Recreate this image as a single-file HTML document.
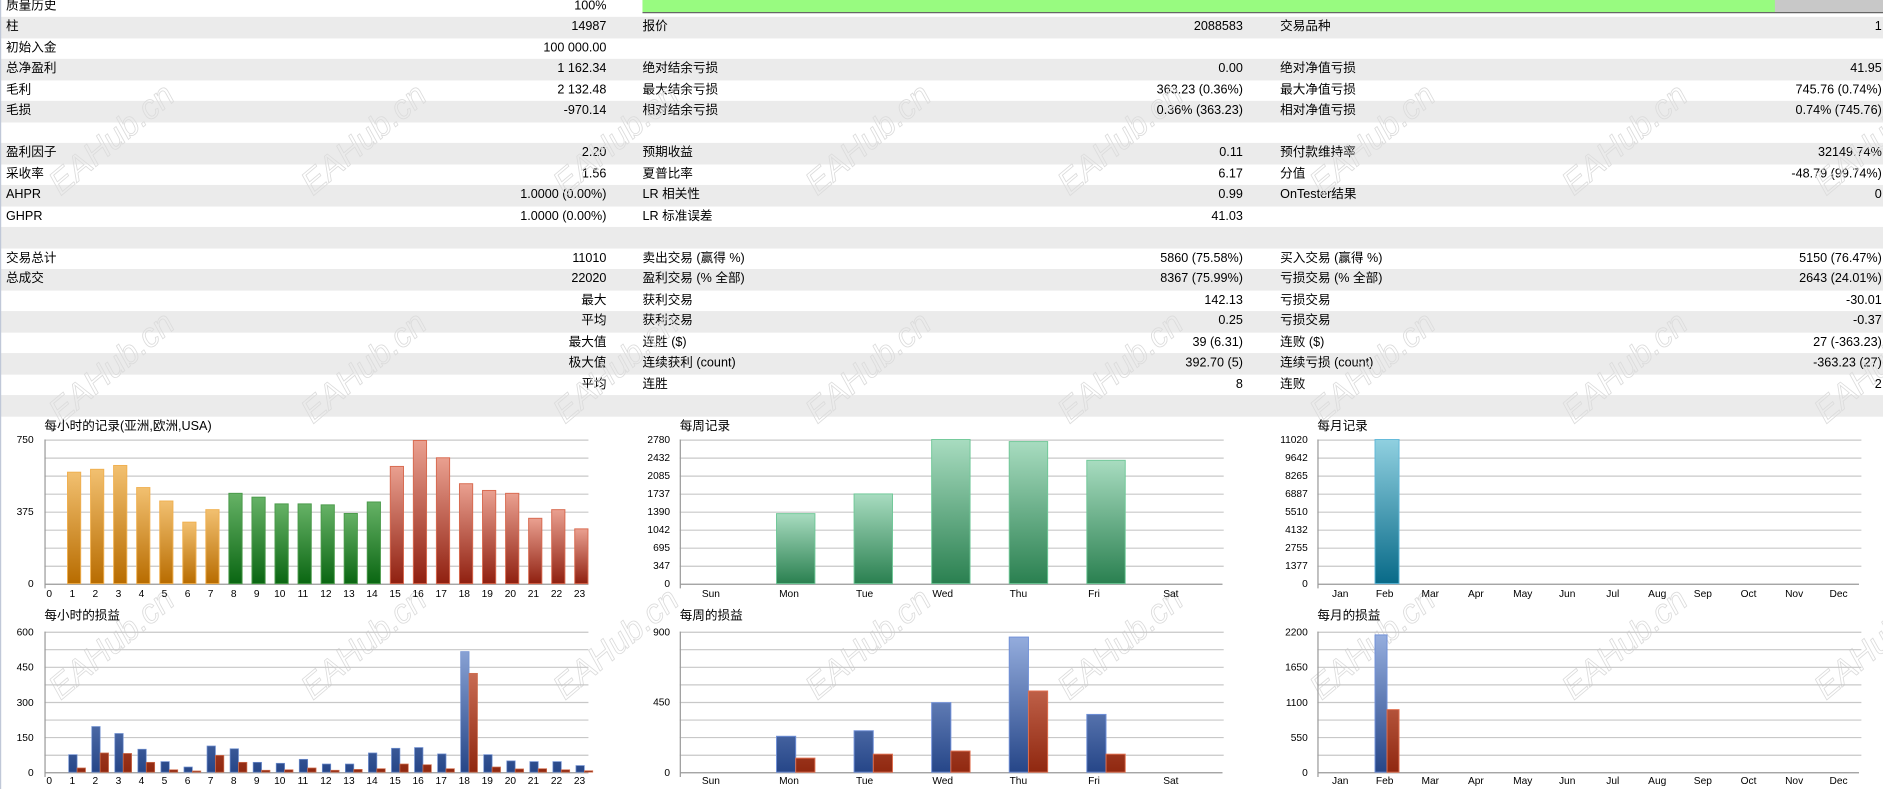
<!DOCTYPE html>
<html><head><meta charset="utf-8">
<style>
html,body{margin:0;padding:0;background:#fff;overflow:hidden;}
#wrap{position:absolute;left:0;top:0;width:1568px;height:657px;transform:scale(1.20089);transform-origin:0 0;font-family:"Liberation Sans","Noto Sans CJK SC",sans-serif;font-size:10.5px;color:#000;}
.row{position:absolute;left:0;width:1568px;height:17.5px;}
.g{background:#ebebeb;}
.c{position:absolute;top:0;line-height:17.5px;white-space:nowrap;}
.l1{left:5px}.v1{right:1063px}.l2{left:535px}.v2{right:533px}.l3{left:1066px}.v3{right:1px}
#lb{position:absolute;left:0;top:0;width:1px;height:657px;background:#c0c8d8;}
.wm{position:absolute;font-size:28px;font-style:italic;color:transparent;-webkit-text-stroke:0.7px #dcdcdc;transform:rotate(-40deg);white-space:nowrap;font-family:"Liberation Sans",sans-serif;}
svg text{font-family:"Liberation Sans","Noto Sans CJK SC",sans-serif;}
</style></head><body><div id="wrap">
<div class="row" style="top:-3.5px"><span class="c l1">质量历史</span><span class="c v1">100%</span>
<div style="position:absolute;left:535px;top:3.5px;width:1033px;height:10px;background:#c8c8c8;border-bottom:1px solid #666;"><div style="width:943px;height:10px;background:#98fb80;"></div></div></div>
<div class="row g" style="top:14px"><span class="c l1">柱</span><span class="c v1">14987</span><span class="c l2">报价</span><span class="c v2">2088583</span><span class="c l3">交易品种</span><span class="c v3">1</span></div>
<div class="row" style="top:31.5px"><span class="c l1">初始入金</span><span class="c v1">100 000.00</span></div>
<div class="row g" style="top:49px"><span class="c l1">总净盈利</span><span class="c v1">1 162.34</span><span class="c l2">绝对结余亏损</span><span class="c v2">0.00</span><span class="c l3">绝对净值亏损</span><span class="c v3">41.95</span></div>
<div class="row" style="top:66.5px"><span class="c l1">毛利</span><span class="c v1">2 132.48</span><span class="c l2">最大结余亏损</span><span class="c v2">363.23 (0.36%)</span><span class="c l3">最大净值亏损</span><span class="c v3">745.76 (0.74%)</span></div>
<div class="row g" style="top:84px"><span class="c l1">毛损</span><span class="c v1">-970.14</span><span class="c l2">相对结余亏损</span><span class="c v2">0.36% (363.23)</span><span class="c l3">相对净值亏损</span><span class="c v3">0.74% (745.76)</span></div>
<div class="row" style="top:101.5px"></div>
<div class="row g" style="top:119px"><span class="c l1">盈利因子</span><span class="c v1">2.20</span><span class="c l2">预期收益</span><span class="c v2">0.11</span><span class="c l3">预付款维持率</span><span class="c v3">32149.74%</span></div>
<div class="row" style="top:136.5px"><span class="c l1">采收率</span><span class="c v1">1.56</span><span class="c l2">夏普比率</span><span class="c v2">6.17</span><span class="c l3">分值</span><span class="c v3">-48.79 (99.74%)</span></div>
<div class="row g" style="top:154px"><span class="c l1">AHPR</span><span class="c v1">1.0000 (0.00%)</span><span class="c l2">LR 相关性</span><span class="c v2">0.99</span><span class="c l3">OnTester结果</span><span class="c v3">0</span></div>
<div class="row" style="top:171.5px"><span class="c l1">GHPR</span><span class="c v1">1.0000 (0.00%)</span><span class="c l2">LR 标准误差</span><span class="c v2">41.03</span></div>
<div class="row g" style="top:189px"></div>
<div class="row" style="top:206.5px"><span class="c l1">交易总计</span><span class="c v1">11010</span><span class="c l2">卖出交易 (赢得 %)</span><span class="c v2">5860 (75.58%)</span><span class="c l3">买入交易 (赢得 %)</span><span class="c v3">5150 (76.47%)</span></div>
<div class="row g" style="top:224px"><span class="c l1">总成交</span><span class="c v1">22020</span><span class="c l2">盈利交易 (% 全部)</span><span class="c v2">8367 (75.99%)</span><span class="c l3">亏损交易 (% 全部)</span><span class="c v3">2643 (24.01%)</span></div>
<div class="row" style="top:241.5px"><span class="c v1">最大</span><span class="c l2">获利交易</span><span class="c v2">142.13</span><span class="c l3">亏损交易</span><span class="c v3">-30.01</span></div>
<div class="row g" style="top:259px"><span class="c v1">平均</span><span class="c l2">获利交易</span><span class="c v2">0.25</span><span class="c l3">亏损交易</span><span class="c v3">-0.37</span></div>
<div class="row" style="top:276.5px"><span class="c v1">最大值</span><span class="c l2">连胜 ($)</span><span class="c v2">39 (6.31)</span><span class="c l3">连败 ($)</span><span class="c v3">27 (-363.23)</span></div>
<div class="row g" style="top:294px"><span class="c v1">极大值</span><span class="c l2">连续获利 (count)</span><span class="c v2">392.70 (5)</span><span class="c l3">连续亏损 (count)</span><span class="c v3">-363.23 (27)</span></div>
<div class="row" style="top:311.5px"><span class="c v1">平均</span><span class="c l2">连胜</span><span class="c v2">8</span><span class="c l3">连败</span><span class="c v3">2</span></div>
<div class="row g" style="top:329px"></div>

<div class="wm" style="left:30px;top:100px">EAHub.cn</div><div class="wm" style="left:240px;top:100px">EAHub.cn</div><div class="wm" style="left:450px;top:100px">EAHub.cn</div><div class="wm" style="left:660px;top:100px">EAHub.cn</div><div class="wm" style="left:870px;top:100px">EAHub.cn</div><div class="wm" style="left:1080px;top:100px">EAHub.cn</div><div class="wm" style="left:1290px;top:100px">EAHub.cn</div><div class="wm" style="left:1500px;top:100px">EAHub.cn</div>
<div class="wm" style="left:30px;top:290px">EAHub.cn</div><div class="wm" style="left:240px;top:290px">EAHub.cn</div><div class="wm" style="left:450px;top:290px">EAHub.cn</div><div class="wm" style="left:660px;top:290px">EAHub.cn</div><div class="wm" style="left:870px;top:290px">EAHub.cn</div><div class="wm" style="left:1080px;top:290px">EAHub.cn</div><div class="wm" style="left:1290px;top:290px">EAHub.cn</div><div class="wm" style="left:1500px;top:290px">EAHub.cn</div>
<div class="wm" style="left:30px;top:520px">EAHub.cn</div><div class="wm" style="left:240px;top:520px">EAHub.cn</div><div class="wm" style="left:450px;top:520px">EAHub.cn</div><div class="wm" style="left:660px;top:520px">EAHub.cn</div><div class="wm" style="left:870px;top:520px">EAHub.cn</div><div class="wm" style="left:1080px;top:520px">EAHub.cn</div><div class="wm" style="left:1290px;top:520px">EAHub.cn</div><div class="wm" style="left:1500px;top:520px">EAHub.cn</div>

<svg style="position:absolute;left:0;top:0" width="1568" height="657" viewBox="0 0 1568 657">
<defs>
<linearGradient id="or" x1="0" y1="0" x2="0" y2="1"><stop offset="0" stop-color="#b86c00"/><stop offset="1" stop-color="#f2c070"/></linearGradient>
<linearGradient id="gr" x1="0" y1="0" x2="0" y2="1"><stop offset="0" stop-color="#0a6612"/><stop offset="1" stop-color="#66b266"/></linearGradient>
<linearGradient id="rd" x1="0" y1="0" x2="0" y2="1"><stop offset="0" stop-color="#902010"/><stop offset="1" stop-color="#eaa090"/></linearGradient>
<linearGradient id="wk" x1="0" y1="0" x2="0" y2="1"><stop offset="0" stop-color="#2a8050"/><stop offset="1" stop-color="#a8dcc0"/></linearGradient>
<linearGradient id="mo" x1="0" y1="0" x2="0" y2="1"><stop offset="0" stop-color="#086a88"/><stop offset="1" stop-color="#90d0e0"/></linearGradient>
<linearGradient id="bl" gradientUnits="userSpaceOnUse" x1="0" y1="0" x2="0" y2="117"><stop offset="0" stop-color="#264688"/><stop offset="1" stop-color="#98b0e0"/></linearGradient>
<linearGradient id="rr" gradientUnits="userSpaceOnUse" x1="0" y1="0" x2="0" y2="117"><stop offset="0" stop-color="#902810"/><stop offset="1" stop-color="#e08870"/></linearGradient>
<g id="gt" stroke="#c8c8c8" stroke-width="1"><path d="M0 366.5H453M0 381.5H453M0 396.5H453M0 411.5H453M0 426.5H453M0 441.5H453M0 456.5H453M0 471.5H453"/></g>
<g id="gb" stroke="#c8c8c8" stroke-width="1"><path d="M0 526.5H453M0 541H453M0 555.7H453M0 570.3H453M0 585H453M0 599.6H453M0 614.2H453M0 628.9H453"/></g>
</defs>
<g font-size="8.5" fill="#000">
<text x="37" y="358" font-size="10.5">每小时的记录(亚洲,欧洲,USA)</text>
<use href="#gt" x="37"/><path d="M37 486.5H490M37.5 366V490" stroke="#999"/>
<g text-anchor="end"><text x="28" y="369">750</text><text x="28" y="429">375</text><text x="28" y="489">0</text></g>
<g transform="translate(0,486) scale(1,-1)" stroke-width="0.8">
<g fill="url(#or)" stroke="#f0b050"><rect x="56.2" y="0" width="11" height="92.8"/><rect x="75.4" y="0" width="11" height="95.2"/><rect x="94.6" y="0" width="11" height="98.4"/><rect x="113.8" y="0" width="11" height="80"/><rect x="133" y="0" width="11" height="68.8"/><rect x="152.2" y="0" width="11" height="51.2"/><rect x="171.4" y="0" width="11" height="61.6"/></g>
<g fill="url(#gr)" stroke="#4a9a4a"><rect x="190.6" y="0" width="11" height="75.2"/><rect x="209.8" y="0" width="11" height="72"/><rect x="229" y="0" width="11" height="66.4"/><rect x="248.2" y="0" width="11" height="66.4"/><rect x="267.4" y="0" width="11" height="65.6"/><rect x="286.6" y="0" width="11" height="58.4"/><rect x="305.8" y="0" width="11" height="68"/></g>
<g fill="url(#rd)" stroke="#d86a50"><rect x="325" y="0" width="11" height="97.6"/><rect x="344.2" y="0" width="11" height="119.2"/><rect x="363.4" y="0" width="11" height="104.8"/><rect x="382.6" y="0" width="11" height="83.2"/><rect x="401.8" y="0" width="11" height="77.6"/><rect x="421" y="0" width="11" height="75.2"/><rect x="440.2" y="0" width="11" height="54.4"/><rect x="459.4" y="0" width="11" height="61.6"/><rect x="478.6" y="0" width="11" height="45.6"/></g>
</g>
<g text-anchor="middle"><text x="41" y="497">0</text><text x="60.2" y="497">1</text><text x="79.4" y="497">2</text><text x="98.6" y="497">3</text><text x="117.8" y="497">4</text><text x="137" y="497">5</text><text x="156.2" y="497">6</text><text x="175.4" y="497">7</text><text x="194.6" y="497">8</text><text x="213.8" y="497">9</text><text x="233" y="497">10</text><text x="252.2" y="497">11</text><text x="271.4" y="497">12</text><text x="290.6" y="497">13</text><text x="309.8" y="497">14</text><text x="329" y="497">15</text><text x="348.2" y="497">16</text><text x="367.4" y="497">17</text><text x="386.6" y="497">18</text><text x="405.8" y="497">19</text><text x="425" y="497">20</text><text x="444.2" y="497">21</text><text x="463.4" y="497">22</text><text x="482.6" y="497">23</text></g>

<text x="37" y="516" font-size="10.5">每小时的损益</text>
<use href="#gb" x="37"/><path d="M37 643.5H490M37.5 526V647" stroke="#999"/>
<g text-anchor="end"><text x="28" y="529">600</text><text x="28" y="558.5">450</text><text x="28" y="588">300</text><text x="28" y="617">150</text><text x="28" y="646">0</text></g>
<g transform="translate(0,643) scale(1,-1)" stroke-width="0.6">
<g fill="url(#bl)" stroke="#7090d0"><rect x="57.2" width="7" height="14.6"/><rect x="76.4" width="7" height="38"/><rect x="95.6" width="7" height="32.2"/><rect x="114.8" width="7" height="19.1"/><rect x="134" width="7" height="8.8"/><rect x="153.2" width="7" height="4.3"/><rect x="172.4" width="7" height="21.8"/><rect x="191.6" width="7" height="19.5"/><rect x="210.8" width="7" height="8.2"/><rect x="230" width="7" height="7.4"/><rect x="249.2" width="7" height="10.7"/><rect x="268.4" width="7" height="6.8"/><rect x="287.6" width="7" height="6.8"/><rect x="306.8" width="7" height="16"/><rect x="326" width="7" height="19.9"/><rect x="345.2" width="7" height="20.5"/><rect x="364.4" width="7" height="15.2"/><rect x="383.6" width="7" height="100.4"/><rect x="402.8" width="7" height="14.6"/><rect x="422" width="7" height="9.4"/><rect x="441.2" width="7" height="8.8"/><rect x="460.4" width="7" height="8.8"/><rect x="479.6" width="7" height="5.5"/></g>
<g fill="url(#rr)" stroke="#d07050"><rect x="64.2" width="7" height="3.5"/><rect x="83.4" width="7" height="16"/><rect x="102.6" width="7" height="15.6"/><rect x="121.8" width="7" height="8.2"/><rect x="141" width="7" height="2"/><rect x="160.2" width="7" height="1"/><rect x="179.4" width="7" height="14"/><rect x="198.6" width="7" height="8.2"/><rect x="217.8" width="7" height="1.6"/><rect x="237" width="7" height="2"/><rect x="256.2" width="7" height="3.5"/><rect x="275.4" width="7" height="1.6"/><rect x="294.6" width="7" height="2.3"/><rect x="313.8" width="7" height="2.9"/><rect x="333" width="7" height="6.8"/><rect x="352.2" width="7" height="6.2"/><rect x="371.4" width="7" height="2.9"/><rect x="390.6" width="7" height="82.3"/><rect x="409.8" width="7" height="4.3"/><rect x="429" width="7" height="2.7"/><rect x="448.2" width="7" height="2.9"/><rect x="467.4" width="7" height="2"/><rect x="486.6" width="7" height="1.2"/></g>
</g>
<g text-anchor="middle"><text x="41" y="653">0</text><text x="60.2" y="653">1</text><text x="79.4" y="653">2</text><text x="98.6" y="653">3</text><text x="117.8" y="653">4</text><text x="137" y="653">5</text><text x="156.2" y="653">6</text><text x="175.4" y="653">7</text><text x="194.6" y="653">8</text><text x="213.8" y="653">9</text><text x="233" y="653">10</text><text x="252.2" y="653">11</text><text x="271.4" y="653">12</text><text x="290.6" y="653">13</text><text x="309.8" y="653">14</text><text x="329" y="653">15</text><text x="348.2" y="653">16</text><text x="367.4" y="653">17</text><text x="386.6" y="653">18</text><text x="405.8" y="653">19</text><text x="425" y="653">20</text><text x="444.2" y="653">21</text><text x="463.4" y="653">22</text><text x="482.6" y="653">23</text></g>

<text x="566" y="358" font-size="10.5">每周记录</text>
<use href="#gt" x="566"/><path d="M566 486.5H1018M566.5 366V490" stroke="#999"/>
<g text-anchor="end"><text x="558" y="369">2780</text><text x="558" y="384">2432</text><text x="558" y="399">2085</text><text x="558" y="414">1737</text><text x="558" y="429">1390</text><text x="558" y="444">1042</text><text x="558" y="459">695</text><text x="558" y="474">347</text><text x="558" y="489">0</text></g>
<g transform="translate(0,486) scale(1,-1)" fill="url(#wk)" stroke="#70c898" stroke-width="0.8"><rect x="646.6" width="32" height="58.3"/><rect x="711.2" width="32" height="74.7"/><rect x="775.8" width="32" height="120"/><rect x="840.4" width="32" height="118.3"/><rect x="905" width="32" height="102.7"/></g>
<g text-anchor="middle"><text x="592" y="497">Sun</text><text x="657" y="497">Mon</text><text x="720" y="497">Tue</text><text x="785" y="497">Wed</text><text x="848" y="497">Thu</text><text x="911" y="497">Fri</text><text x="975" y="497">Sat</text></g>

<text x="566" y="516" font-size="10.5">每周的损益</text>
<use href="#gb" x="566"/><path d="M566 643.5H1018M566.5 526V647" stroke="#999"/>
<g text-anchor="end"><text x="558" y="529">900</text><text x="558" y="587.5">450</text><text x="558" y="646">0</text></g>
<g transform="translate(0,643) scale(1,-1)" stroke-width="0.8">
<g fill="url(#bl)" stroke="#7090d8"><rect x="646.6" width="16" height="29.9"/><rect x="711.2" width="16" height="34.5"/><rect x="775.8" width="16" height="57.9"/><rect x="840.4" width="16" height="112.5"/><rect x="905" width="16" height="48.1"/></g>
<g fill="url(#rr)" stroke="#e07050"><rect x="662.6" width="16" height="11.7"/><rect x="727.2" width="16" height="15"/><rect x="791.8" width="16" height="17.6"/><rect x="856.4" width="16" height="67.6"/><rect x="921" width="16" height="15"/></g>
</g>
<g text-anchor="middle"><text x="592" y="653">Sun</text><text x="657" y="653">Mon</text><text x="720" y="653">Tue</text><text x="785" y="653">Wed</text><text x="848" y="653">Thu</text><text x="911" y="653">Fri</text><text x="975" y="653">Sat</text></g>

<text x="1097" y="358" font-size="10.5">每月记录</text>
<use href="#gt" x="1097"/><path d="M1097 486.5H1548M1097.5 366V490" stroke="#999"/>
<g text-anchor="end"><text x="1089" y="369">11020</text><text x="1089" y="384">9642</text><text x="1089" y="399">8265</text><text x="1089" y="414">6887</text><text x="1089" y="429">5510</text><text x="1089" y="444">4132</text><text x="1089" y="459">2755</text><text x="1089" y="474">1377</text><text x="1089" y="489">0</text></g>
<rect x="1145" y="366" width="20" height="120" fill="url(#mo)" stroke="#60b8d8" stroke-width="0.8" transform="translate(0,852) scale(1,-1)"/>
<g text-anchor="middle"><text x="1116" y="497">Jan</text><text x="1153" y="497">Feb</text><text x="1191" y="497">Mar</text><text x="1229" y="497">Apr</text><text x="1268" y="497">May</text><text x="1305" y="497">Jun</text><text x="1343" y="497">Jul</text><text x="1380" y="497">Aug</text><text x="1418" y="497">Sep</text><text x="1456" y="497">Oct</text><text x="1494" y="497">Nov</text><text x="1531" y="497">Dec</text></g>

<text x="1097" y="516" font-size="10.5">每月的损益</text>
<use href="#gb" x="1097"/><path d="M1097 643.5H1548M1097.5 526V647" stroke="#999"/>
<g text-anchor="end"><text x="1089" y="529">2200</text><text x="1089" y="558.5">1650</text><text x="1089" y="588">1100</text><text x="1089" y="617">550</text><text x="1089" y="646">0</text></g>
<g transform="translate(0,643) scale(1,-1)" stroke-width="0.8"><rect x="1145" width="10" height="114.3" fill="url(#bl)" stroke="#7090d8"/><rect x="1155" width="10" height="52.1" fill="url(#rr)" stroke="#e07050"/></g>
<g text-anchor="middle"><text x="1116" y="653">Jan</text><text x="1153" y="653">Feb</text><text x="1191" y="653">Mar</text><text x="1229" y="653">Apr</text><text x="1268" y="653">May</text><text x="1305" y="653">Jun</text><text x="1343" y="653">Jul</text><text x="1380" y="653">Aug</text><text x="1418" y="653">Sep</text><text x="1456" y="653">Oct</text><text x="1494" y="653">Nov</text><text x="1531" y="653">Dec</text></g>
</g>
</svg>
<div id="lb"></div>
</div></body></html>
